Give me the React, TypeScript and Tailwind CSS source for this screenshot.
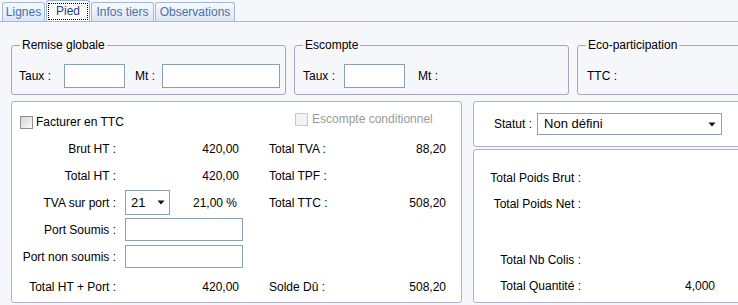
import React from "react";

const tabs = ["Lignes", "Pied", "Infos tiers", "Observations"];

const Arrow = () => (
  <svg width="8" height="5" viewBox="0 0 8 5" className="shrink-0">
    <path d="M0.5 0.5 L7.5 0.5 L4 4.5 Z" fill="#111" />
  </svg>
);

const Check = ({ disabled }: { disabled?: boolean }) => (
  <span
    className={
      disabled
        ? "w-[13px] h-[13px] border border-[#c8c8c8] bg-[#f3f3f3] shrink-0"
        : "w-[13px] h-[13px] border border-[#8e8f8f] bg-gradient-to-br from-[#d6d6d6] to-[#fafafa] shrink-0"
    }
  />
);

const GroupBox = ({
  title,
  width,
  children,
}: {
  title: string;
  width: string;
  children?: React.ReactNode;
}) => (
  <fieldset
    className={`${width} h-[57px] border border-[#aaa3c4] rounded-[3px] shrink-0`}
  >
    <legend className="ml-[8px] px-[2px] leading-[14px] text-[#000]">{title}</legend>
    <div className="flex items-center h-[24px] mt-[12px]">{children}</div>
  </fieldset>
);

// ligne du panneau de gauche
const Row = ({
  label,
  value,
  rLabel,
  rValue,
  middle,
  className,
}: {
  label: string;
  value?: string;
  rLabel?: string;
  rValue?: string;
  middle?: React.ReactNode;
  className?: string;
}) => (
  <div className={`flex items-center h-[27px] ${className ?? ""}`}>
    <div className="w-[104px] text-right whitespace-nowrap">{label}</div>
    <div className="ml-[9px] w-[114px] flex items-center justify-end">
      {middle ?? <span>{value}</span>}
    </div>
    {rLabel && (
      <>
        <div className="ml-[30px] w-[100px] whitespace-nowrap">{rLabel}</div>
        <div className="w-[77px] text-right">{rValue}</div>
      </>
    )}
  </div>
);

const RightRow = ({ label, value, className }: { label: string; value?: string; className?: string }) => (
  <div className={`flex items-center h-[26px] ${className ?? ""}`}>
    <div className="w-[107px] text-right whitespace-nowrap">{label}</div>
    <div className="w-[134px] text-right">{value}</div>
  </div>
);

export default function App() {
  return (
    <div
      className="w-[738px] h-[305px] overflow-hidden bg-[#f6f7fb] text-[12px] leading-[14px] text-[#000]"
      style={{ fontFamily: '"Liberation Sans", Arial, sans-serif' }}
    >
      {/* onglets */}
      <div className="flex items-end h-[22px] border-b border-[#a3b8da] pl-[1px]">
        {tabs.map((t) =>
          t === "Pied" ? (
            <div
              key={t}
              className="ml-[1px] h-[21px] w-[44px] bg-white border border-b-0 border-[#9cb3d8] rounded-t-[3px] flex items-start justify-center pt-[2px]"
            >
              <span className="border border-dotted border-black px-[4px] h-[17px] w-[40px] text-center leading-[15px] text-[#1c3b86]">
                {t}
              </span>
            </div>
          ) : (
            <div
              key={t}
              className="ml-[1px] h-[19px] px-[2px] bg-gradient-to-b from-[#f7fafe] to-[#d9e6f6] border border-b-0 border-[#a3b9dc] rounded-t-[3px] flex items-center justify-center text-[#4f6ea8]"
              style={{ width: t === "Lignes" ? 43 : t === "Infos tiers" ? 63 : 80 }}
            >
              {t}
            </div>
          )
        )}
      </div>

      {/* groupes du haut */}
      <div className="flex pt-[16px] pl-[11px]">
        <GroupBox title="Remise globale" width="w-[275px]">
          <span className="ml-[7px] w-[45px]">Taux :</span>
          <span className="w-[61px] h-[24px] border border-[#8b9fb6] bg-white" />
          <span className="ml-[10px] w-[27px]">Mt :</span>
          <span className="w-[118px] h-[24px] border border-[#8b9fb6] bg-white" />
        </GroupBox>
        <div className="w-[8px] shrink-0" />
        <GroupBox title="Escompte" width="w-[275px]">
          <span className="ml-[8px] w-[41px]">Taux :</span>
          <span className="w-[61px] h-[24px] border border-[#8b9fb6] bg-white" />
          <span className="ml-[13px]">Mt :</span>
        </GroupBox>
        <div className="w-[8px] shrink-0" />
        <GroupBox title="Eco-participation" width="w-[200px]">
          <span className="ml-[9px]">TTC :</span>
        </GroupBox>
      </div>

      {/* panneaux du bas */}
      <div className="flex pt-[6px] pl-[11px]">
        <div className="w-[451px] h-[202px] shrink-0 bg-white border border-[#b5aecb] rounded-[3px] pt-[7px]">
          <div className="flex h-[26px]">
            <div className="w-[283px] pl-[8px] flex items-center gap-[2px]">
              <Check />
              <span className="ml-[1px]">Facturer en TTC</span>
            </div>
            <div className="flex items-center gap-[4px] -mt-[6px] text-[#9a9a9a]">
              <Check disabled />
              <span>Escompte conditionnel</span>
            </div>
          </div>
          <Row label="Brut HT :" value="420,00" rLabel="Total TVA :" rValue="88,20" />
          <Row label="Total HT :" value="420,00" rLabel="Total TPF :" />
          <Row
            label="TVA sur port :"
            rLabel="Total TTC :"
            rValue="508,20"
            middle={
              <div className="flex items-center w-full">
                <div className="w-[45px] h-[25px] border border-[#8b9fb6] bg-white flex items-center pl-[5px] pr-[4px] justify-between">
                  <span className="text-[13px]">21</span>
                  <Arrow />
                </div>
                <span className="ml-auto mr-[2px]">21,00 %</span>
              </div>
            }
          />
          <Row
            label="Port Soumis :"
            middle={<div className="w-[118px] h-[23px] shrink-0 border border-[#8b9fb6] bg-white -mr-[4px]" />}
          />
          <Row
            label="Port non soumis :"
            middle={<div className="w-[118px] h-[23px] shrink-0 border border-[#8b9fb6] bg-white -mr-[4px]" />}
          />
          <Row
            label="Total HT + Port :"
            value="420,00"
            rLabel="Solde Dû :"
            rValue="508,20"
            className="mt-[3px]"
          />
        </div>

        <div className="ml-[11px] flex flex-col gap-[2px]">
          <div className="w-[280px] h-[46px] bg-white border border-[#b5aecb] rounded-[3px] flex items-center pl-[20px]">
            <span className="mr-[5px]">Statut :</span>
            <div className="w-[185px] h-[22px] border border-[#8b9fb6] bg-white flex items-center pl-[6px] pr-[5px] justify-between">
              <span className="text-[13px]">Non défini</span>
              <Arrow />
            </div>
          </div>
          <div className="w-[280px] h-[154px] bg-white border border-[#b5aecb] rounded-[3px] pt-[15px]">
            <RightRow label="Total Poids Brut :" />
            <RightRow label="Total Poids Net :" />
            <RightRow label="Total Nb Colis :" className="mt-[30px]" />
            <RightRow label="Total Quantité :" value="4,000" />
          </div>
        </div>
      </div>
    </div>
  );
}
